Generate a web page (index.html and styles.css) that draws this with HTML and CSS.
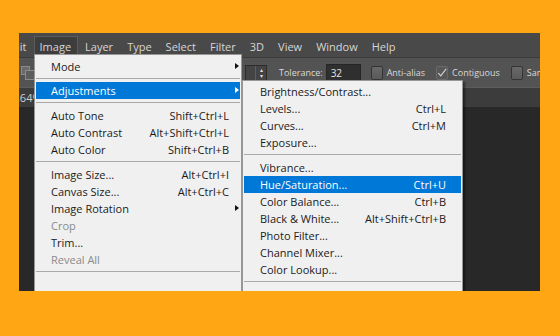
FILE: index.html
```html
<!DOCTYPE html>
<html lang="en">
<head>
  <meta charset="UTF-8"/>
  <title>Image &gt; Adjustments</title>
  <link rel="stylesheet" href="styles.css">
</head>
<body>

  <div class="ps">
    <!-- MENU BAR -->
    <div class="menubar">
      <span class="mb-item mb-edit">Edit</span>
      <span class="mb-item active">Image</span>
      <span class="mb-item">Layer</span>
      <span class="mb-item">Type</span>
      <span class="mb-item">Select</span>
      <span class="mb-item">Filter</span>
      <span class="mb-item">3D</span>
      <span class="mb-item">View</span>
      <span class="mb-item">Window</span>
      <span class="mb-item">Help</span>
    </div>

    <!-- OPTIONS BAR -->
    <div class="options">
      <svg class="tool-icon" width="14" height="14" viewBox="0 0 14 14">
        <rect x="0.5" y="0.5" width="8" height="8" fill="#6a6a6a" stroke="#8a8a8a"/>
        <rect x="4.5" y="4.5" width="9" height="9" fill="#5d5d5d" stroke="#8a8a8a"/>
      </svg>
      <span class="spinner"><span class="spin-arrows">&#9652;<br>&#9662;</span></span>
      <span class="opt-label tol">Tolerance:</span>
      <span class="opt-input">32</span>
      <span class="check"></span>
      <span class="opt-label">Anti-alias</span>
      <span class="check checked">
        <svg width="12" height="12" viewBox="0 0 12 12"><path d="M1.5 6 L4.5 9.5 L11 1" fill="none" stroke="#d4d4d4" stroke-width="1.3"/></svg>
      </span>
      <span class="opt-label">Contiguous</span>
      <span class="check"></span>
      <span class="opt-label">Sample All Layers</span>
    </div>

    <!-- DOCUMENT TABS -->
    <div class="tabs"><span class="tab-label">,64%</span></div>

    <div class="canvas"></div>

    <!-- IMAGE MENU -->
    <div class="menu main-menu">
      <div class="item has-sub"><span class="label">Mode</span><span class="arrow"></span></div>
      <div class="sep"></div>
      <div class="item has-sub hl"><span class="label">Adjustments</span><span class="arrow"></span></div>
      <div class="sep"></div>
      <div class="item"><span class="label">Auto Tone</span><span class="key">Shift+Ctrl+L</span><span class="arrow-cell"></span></div>
      <div class="item"><span class="label">Auto Contrast</span><span class="key">Alt+Shift+Ctrl+L</span><span class="arrow-cell"></span></div>
      <div class="item"><span class="label">Auto Color</span><span class="key">Shift+Ctrl+B</span><span class="arrow-cell"></span></div>
      <div class="sep"></div>
      <div class="item"><span class="label">Image Size...</span><span class="key">Alt+Ctrl+I</span><span class="arrow-cell"></span></div>
      <div class="item"><span class="label">Canvas Size...</span><span class="key">Alt+Ctrl+C</span><span class="arrow-cell"></span></div>
      <div class="item has-sub"><span class="label">Image Rotation</span><span class="arrow"></span></div>
      <div class="item disabled"><span class="label">Crop</span></div>
      <div class="item"><span class="label">Trim...</span></div>
      <div class="item disabled"><span class="label">Reveal All</span></div>
      <div class="sep"></div>
    </div>

    <!-- ADJUSTMENTS SUBMENU -->
    <div class="menu sub-menu">
      <div class="item"><span class="label">Brightness/Contrast...</span></div>
      <div class="item"><span class="label">Levels...</span><span class="key">Ctrl+L</span></div>
      <div class="item"><span class="label">Curves...</span><span class="key">Ctrl+M</span></div>
      <div class="item"><span class="label">Exposure...</span></div>
      <div class="sep"></div>
      <div class="item"><span class="label">Vibrance...</span></div>
      <div class="item hl"><span class="label">Hue/Saturation...</span><span class="key">Ctrl+U</span></div>
      <div class="item"><span class="label">Color Balance...</span><span class="key">Ctrl+B</span></div>
      <div class="item"><span class="label">Black &amp; White...</span><span class="key">Alt+Shift+Ctrl+B</span></div>
      <div class="item"><span class="label">Photo Filter...</span></div>
      <div class="item"><span class="label">Channel Mixer...</span></div>
      <div class="item"><span class="label">Color Lookup...</span></div>
      <div class="sep"></div>
    </div>
  </div>

</body>
</html>
```

FILE: styles.css
```css
* { box-sizing: border-box; }
body {
  margin: 0;
  width: 560px;
  height: 336px;
  overflow: hidden;
  background: #ffa615;
  font-family: 'Open Sans', 'Noto Sans', sans-serif;
  font-size: 11px;
}

.ps {
  position: relative;
  margin: 33px 0 0 19px;
  width: 521px;
  height: 258px;
  background: #282828;
  overflow: hidden;
  display: flex;
  flex-direction: column;
}

/* menu bar */
.menubar {
  height: 25px;
  flex: none;
  background: #494949;
  border-bottom: 1px solid #3b3b3b;
  display: flex;
  align-items: flex-end;
  color: #d6d6d6;
  font-size: 11px;
  white-space: nowrap;
}
.mb-item {
  flex: none;
  height: 21px;
  line-height: 19px;
  padding: 0 6px;
  border: 1px solid transparent;
  border-bottom: none;
}
.mb-edit { margin-left: -19px; }
.mb-item.active {
  background: #3d3d3d;
  border-color: #5c5c5c;
  padding: 0 6px 0 5px;
}

/* options bar */
.options {
  height: 30px;
  flex: none;
  background: #535353;
  border-bottom: 1px solid #5d5d5d;
  display: flex;
  align-items: center;
  color: #dadada;
  font-size: 9px;
  white-space: nowrap;
  overflow: hidden;
}
.options > * { flex: none; }
.tool-icon { margin-left: 2px; }
.spinner {
  margin-left: 210px;
  width: 22px;
  height: 16px;
  background: #444;
  border: 1px solid #2c2c2c;
  display: flex;
  justify-content: flex-end;
}
.spin-arrows {
  width: 11px;
  border-left: 1px solid #5e5e5e;
  font-size: 6px;
  line-height: 6px;
  text-align: center;
  padding-top: 1px;
  color: #ddd;
}
.opt-label { margin-right: 5px; }
.opt-label.tol { margin: 0 3px 0 12px; }
.opt-input {
  width: 35px;
  height: 17px;
  line-height: 16px;
  background: #2f2f2f;
  border: 1px solid #262626;
  padding-left: 4px;
  margin-right: 10px;
  color: #e6e6e6;
  font-size: 10px;
}
.check {
  width: 12px;
  height: 14px;
  border: 1px solid #343434;
  border-radius: 2px;
  background: linear-gradient(#686868, #5a5a5a);
  margin-right: 4px;
  display: flex;
  align-items: center;
}
.opt-label + .check { margin-left: 6px; }
.check.checked {
  background: #585858;
  border-color: #6a6a6a;
}

/* document tabs */
.tabs {
  height: 19px;
  flex: none;
  background: #3c3c3c;
  color: #cfcfcf;
  line-height: 19px;
}
.tab-label { margin-left: -2px; }
.canvas {
  flex: 1;
  background: #282828;
}

/* dropdown menus */
.menu {
  position: absolute;
  background: #f0f0f0;
  border: 1px solid #979797;
  padding: 3px 1px 20px;
  color: #1b1b1b;
  white-space: nowrap;
}
.main-menu {
  left: 15px;
  top: 21px;
  width: 208px;
}
.sub-menu {
  left: 223px;
  top: 47px;
  width: 221px;
  padding-top: 2px;
  box-shadow: 2px 2px 2px rgba(0,0,0,0.45);
}
.item {
  height: 17px;
  line-height: 17px;
  display: flex;
}
.main-menu .item { padding-left: 15px; }
.sub-menu .item { padding: 0 15px 0 16px; }
.label { flex: 1; }
.item.hl {
  background: #0078d7;
  color: #fff;
}
.item.disabled { color: #8a8a8a; }
.arrow-cell {
  width: 11px;
  flex: none;
}
.arrow {
  width: 27px;
  flex: none;
  position: relative;
}
.arrow::after {
  content: '';
  position: absolute;
  right: 1px;
  top: 5px;
  border-left: 4px solid #111;
  border-top: 3.5px solid transparent;
  border-bottom: 3.5px solid transparent;
}
.hl .arrow::after { border-left-color: #fff; }
.sep {
  height: 1px;
  background: #a9a9a9;
  margin: 3px 0 4px;
}
.main-menu .sep:nth-child(2) { margin-bottom: 3px; }
```
